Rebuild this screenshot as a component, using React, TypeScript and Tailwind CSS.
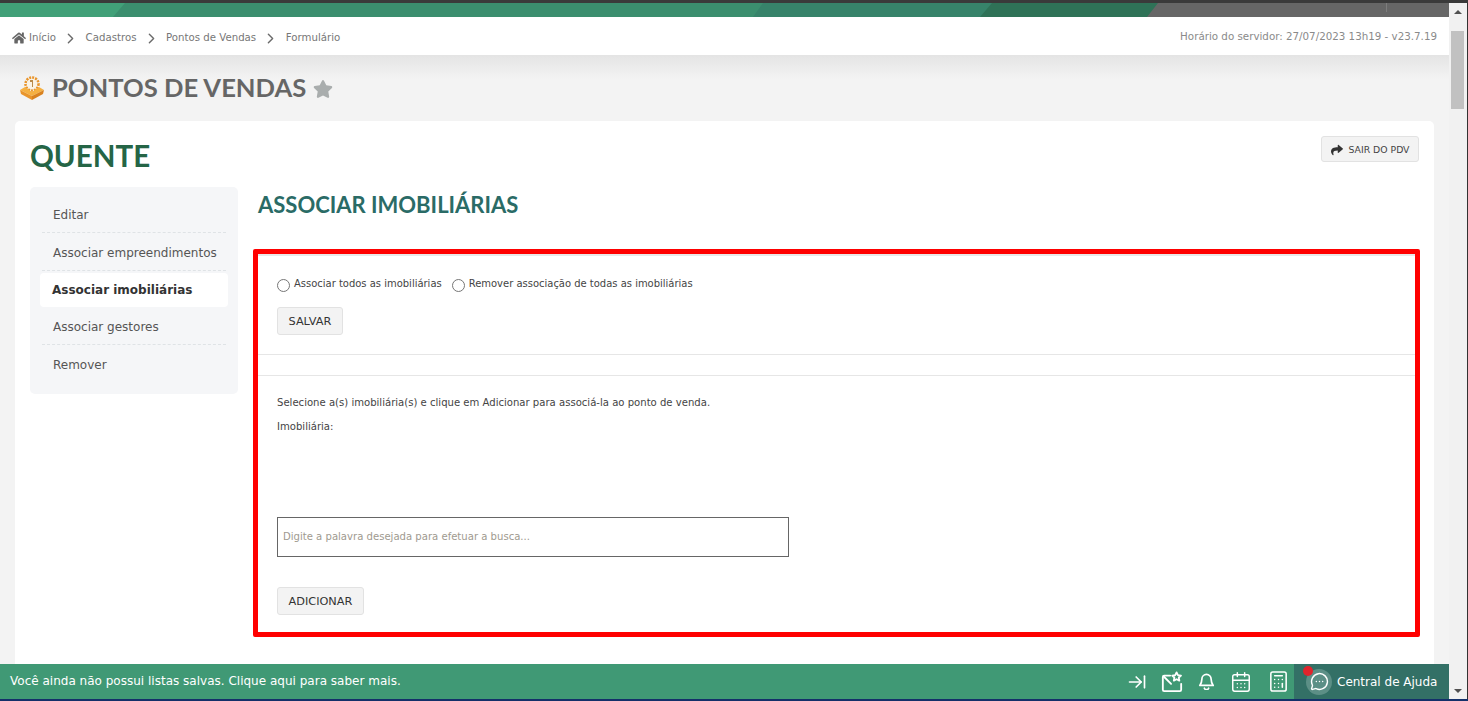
import { ArrowRightToLine, Calculator, CalendarDays, ChevronRight, MessageCircleMore } from "lucide-react";
import { FaHome, FaShare, FaStar } from "react-icons/fa";

const sans = "font-['DejaVu_Sans',sans-serif]";
const lato = "font-['Lato',sans-serif]";

function Banner() {
  return (
    <svg className="block h-[14px] w-full shrink-0" viewBox="0 0 1449 14" preserveAspectRatio="none">
      <rect width="1449" height="14" fill="#666666" />
      <rect x="1386" width="1" height="9" fill="#7d7d7d" />
      <polygon points="0,0 1158,0 1147,14 0,14" fill="#2f7257" />
      <polygon points="0,0 992,0 980,14 0,14" fill="#37836a" />
      <polygon points="0,0 763,0 753,14 0,14" fill="#3b8e6e" />
      <polygon points="0,0 125,0 113,14 0,14" fill="#41a078" />
    </svg>
  );
}

function Crumb({ label }: { label: string }) {
  return (
    <>
      <ChevronRight className="mx-[6.3px] h-[17px] w-[17px] text-[#6b6b6b]" strokeWidth={2} />
      <span>{label}</span>
    </>
  );
}

function Breadcrumb() {
  return (
    <div className={`flex h-[38px] shrink-0 items-center justify-between bg-white pl-3 pr-[12px] pt-[4px] ${sans} text-[10.2px] text-[#777]`}>
      <div className="flex items-center">
        <FaHome className="mr-[3px] h-[14px] w-[14px] text-[#666]" />
        <span>Início</span>
        <Crumb label="Cadastros" />
        <Crumb label="Pontos de Vendas" />
        <Crumb label="Formulário" />
      </div>
      <span className="mb-[3px] text-[10.3px] text-[#8a8a8a]">Horário do servidor: 27/07/2023 13h19 - v23.7.19</span>
    </div>
  );
}

function Logo() {
  return (
    <svg viewBox="0 0 24 24" className="h-[24px] w-[24px]">
      <circle cx="12" cy="8" r="6.5" fill="none" stroke="#e9952b" strokeWidth="2.6" strokeDasharray="2 1" />
      <circle cx="12" cy="8" r="5" fill="#fbf3e4" />
      <path d="M10 4h3v7h-1v-5h-2z" fill="#b98a4a" />
      <polygon points="0,14 5,11 12,16 19,11 24,14 12,20" fill="#f5b041" />
      <polygon points="0,14 12,20 12,24 1,18" fill="#e9952b" />
      <polygon points="24,14 12,20 12,24 23,18" fill="#d9821f" />
    </svg>
  );
}

const menu = ["Editar", "Associar empreendimentos", "Associar imobiliárias", "Associar gestores", "Remover"];

function Sidebar() {
  return (
    <div className={`h-[207px] w-[208px] shrink-0 rounded-[5px] bg-[#f5f6f8] px-[10px] pt-[9px] ${sans} text-[12px] text-[#555]`}>
      <div className="mx-[2px] flex h-[37px] items-center border-b border-dashed border-[#dfe3e6] pl-[11px] pt-[2px]">{menu[0]}</div>
      <div className="mx-[2px] flex h-[38px] items-center border-b border-dashed border-[#dfe3e6] pl-[11px] pt-[2px]">{menu[1]}</div>
      <div className="mt-[2px] flex h-[34px] items-center rounded-[4px] bg-white pl-[12px] font-bold text-[#333]">{menu[2]}</div>
      <div className="mx-[2px] flex h-[38px] items-center border-b border-dashed border-[#dfe3e6] pl-[11px] pt-[2px]">{menu[3]}</div>
      <div className="mx-[2px] flex h-[37px] items-center pl-[11px] pt-[2px]">{menu[4]}</div>
    </div>
  );
}

function Radio({ label }: { label: string }) {
  return (
    <label className="flex items-center text-[9.98px]">
      <span className="mt-[3px] h-[13px] w-[13px] rounded-full border border-[#767676] bg-white" />
      <span className="ml-[4px]">{label}</span>
    </label>
  );
}

function Btn({ label }: { label: string }) {
  return (
    <button className="flex h-[28px] items-center rounded-[3px] border border-[#e2e2e2] bg-[#f3f3f3] px-[10.5px] pt-[2px] text-[11.3px] text-[#333]">
      {label}
    </button>
  );
}

function Panel() {
  return (
    <div className={`mt-[29px] -ml-[5px] h-[388px] w-[1167px] rounded-[2px] border-[5px] border-[#ff0000] ${sans} text-[10.08px] text-[#444]`}>
      <div className="h-[100px] border-t-2 border-[#e8e8e8] px-[19px] pt-[20px]">
        <div className="flex gap-[10px]">
          <Radio label="Associar todos as imobiliárias" />
          <Radio label="Remover associação de todas as imobiliárias" />
        </div>
        <div className="mt-[15px]">
          <Btn label="SALVAR" />
        </div>
      </div>
      <div className="h-[22px] border-y border-[#e6e6e6]" />
      <div className="px-[19px] pt-[21px]">
        <p className="leading-[12px]">Selecione a(s) imobiliária(s) e clique em Adicionar para associá-la ao ponto de venda.</p>
        <p className="mt-[12px] leading-[12px]">Imobiliária:</p>
        <div className="mt-[84px] flex h-[40px] w-[512px] items-center border border-[#666] pl-[5px] text-[#a09a90]">
          Digite a palavra desejada para efetuar a busca...
        </div>
        <div className="mt-[30px]">
          <Btn label="ADICIONAR" />
        </div>
      </div>
    </div>
  );
}

function Footer() {
  return (
    <div className={`flex h-[35px] shrink-0 items-center bg-[#409975] ${sans} text-white`}>
      <span className="flex-1 pl-[10px] text-[12.03px]">Você ainda não possui listas salvas. Clique aqui para saber mais.</span>
      <div className="flex items-center">
        <ArrowRightToLine className="h-[20px] w-[20px]" strokeWidth={2} />
        <svg viewBox="0 0 24 24" className="ml-[14px] h-[22px] w-[22px]" fill="none" stroke="currentColor" strokeWidth="2" strokeLinejoin="round" strokeLinecap="round">
          <path d="M10 5H3.5A1.5 1.5 0 0 0 2 6.5v14A1.5 1.5 0 0 0 3.5 22h17a1.5 1.5 0 0 0 1.5-1.5V14" />
          <path d="M3 6l8 8" />
          <polygon points="17,1.5 18.5,4.6 21.8,5 19.4,7.3 20,10.5 17,9 14,10.5 14.6,7.3 12.2,5 15.5,4.6" />
        </svg>
        <svg viewBox="0 0 24 24" className="ml-[15px] h-[17px] w-[17px]" fill="none" stroke="currentColor" strokeWidth="2.4" strokeLinejoin="round" strokeLinecap="round">
          <path d="M12 2a6.5 6.5 0 0 0-6.5 6.5c0 5-1.5 7-3 9h19c-1.500-2-3-4-3-9A6.500 6.500 0 0 0 12 2z" />
          <path d="M9 21.500a3.200 3.200 0 0 0 6 0" />
        </svg>
        <CalendarDays className="ml-[15px] h-[22px] w-[22px]" strokeWidth={1.6} />
        <Calculator className="ml-[15px] h-[23px] w-[23px]" strokeWidth={1.6} />
      </div>
      <div className="relative ml-[4px] flex h-full w-[155px] items-center bg-[#337066] pl-[12px]">
        <span className="absolute left-[9px] top-[2px] h-[10px] w-[10px] rounded-full bg-[#e0242c]" />
        <span className="flex h-[26px] w-[26px] items-center justify-center rounded-full bg-[#5c8f86]">
          <MessageCircleMore className="h-[19px] w-[19px]" strokeWidth={1.8} />
        </span>
        <span className="ml-[5px] text-[12px]">Central de Ajuda</span>
      </div>
    </div>
  );
}

function Scrollbar() {
  return (
    <div className="flex w-[19px] shrink-0 flex-col border-r border-[#333] bg-[#f1f1f1]">
      <div className="flex h-[17px] w-full items-center justify-center">
        <span className="h-0 w-0 border-x-[4px] border-b-[4px] border-x-transparent border-b-[#505050]" />
      </div>
      <div className="ml-[2px] mt-[11px] h-[78px] w-[13px] bg-[#c1c1c1]" />
      <div className="flex-1" />
      <div className="flex h-[17px] w-full items-center justify-center">
        <span className="h-0 w-0 border-x-[4px] border-t-[4px] border-x-transparent border-t-[#505050]" />
      </div>
    </div>
  );
}

export default function App() {
  return (
    <div className="flex h-[701px] w-[1468px] flex-col overflow-hidden bg-[#1a2a44]">
      <div className="h-[3px] shrink-0 bg-[#3a3a3a]" />
      <div className="flex min-h-0 flex-1">
        <div className="flex min-w-0 flex-1 flex-col">
          <Banner />
          <Breadcrumb />
          <div className="min-h-0 flex-1 overflow-hidden bg-[#f3f3f3] bg-[linear-gradient(#e4e4e4,#f3f3f3_24px)] px-[15px]">
            <div className="flex h-[66px] items-center pl-[5px]">
              <Logo />
              <h1 className={`ml-[8px] ${lato} text-[25.6px] font-bold leading-none text-[#666]`}>PONTOS DE VENDAS</h1>
              <FaStar className="ml-[7px] mt-[2px] h-[20px] w-[20px] text-[#a9adad]" />
            </div>
            <div className="h-[600px] rounded-[5px] bg-white px-[15px] pt-[15px]">
              <div className="flex h-[51px] items-start justify-between">
                <h2 className={`${lato} text-[29.5px] font-bold leading-[39px] text-[#256546]`}>QUENTE</h2>
                <button className={`flex h-[26px] w-[98px] items-center justify-center rounded-[3px] border border-[#e2e2e2] bg-[#f3f3f3] pt-[1px] ${sans} text-[9.3px] text-[#444]`}>
                  <FaShare className="mr-[6px] h-[12px] w-[12px] text-[#333]" />
                  SAIR DO PDV
                </button>
              </div>
              <div className="flex">
                <Sidebar />
                <div className="ml-[20px] min-w-0 flex-1">
                  <h3 className={`${lato} mt-[3px] text-[22px] font-bold leading-[30px] text-[#2a6b66]`}>ASSOCIAR IMOBILIÁRIAS</h3>
                  <Panel />
                </div>
              </div>
            </div>
          </div>
          <Footer />
        </div>
        <Scrollbar />
      </div>
      <div className="h-[2px] shrink-0 bg-[#14306a]" />
    </div>
  );
}
